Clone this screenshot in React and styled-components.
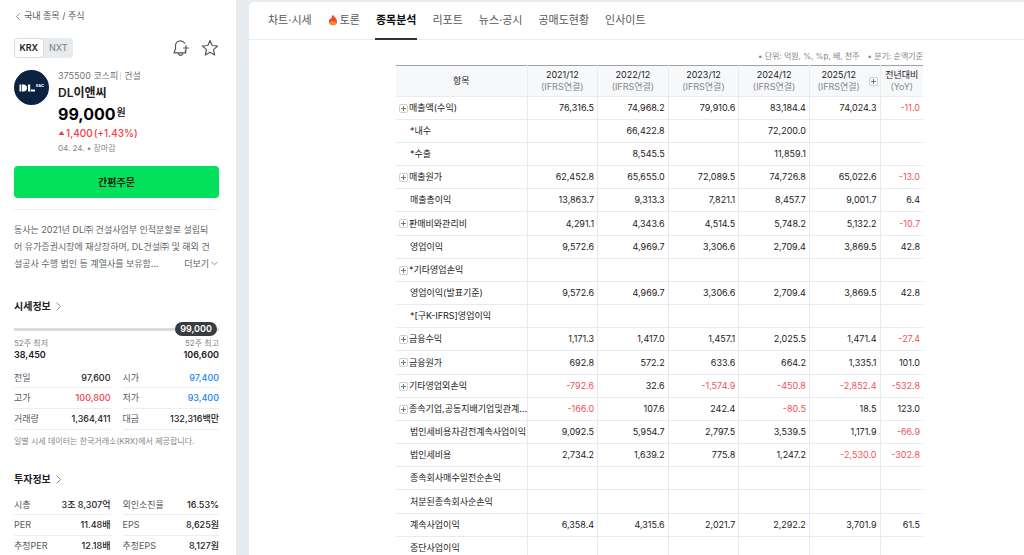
import React from "react";
import styled, { createGlobalStyle } from "styled-components";

const GlobalStyle = createGlobalStyle`
  *, *::before, *::after { box-sizing: border-box; }
  body {
    margin: 0;
    background: #e7ebee;
    color: #1e2022;
    font: 400 9px/12px Inter, "Noto Sans CJK KR", sans-serif;
  }
  button { font: inherit; color: inherit; border: 0; padding: 0; background: none; cursor: pointer; }
  a { color: inherit; text-decoration: none; }
  h1, h2, p, dl, dd, dt { margin: 0; }
  svg { display: block; flex: none; }
`;

const Shell = styled.div`
  display: grid;
  grid-template-columns: 236px minmax(0, 1fr);
  column-gap: 13px;
  height: 100vh;
  overflow: hidden;
`;

const Sidebar = styled.aside`
  padding: 10px 17px 0 14px;
  background: #fff;
  overflow: hidden auto;
  scrollbar-width: none;
`;

const Breadcrumb = styled.nav`
  display: flex;
  align-items: center;
  gap: 4px;
  padding-left: 2px;
  color: #525558;
`;

const Toolbar = styled.div`
  display: flex;
  align-items: center;
  justify-content: space-between;
  margin-top: 16px;
`;

const Market = styled.div`
  display: flex;
  width: 59px;
  height: 20px;
  border-radius: 4px;
  background: #e7ebee;
`;

const MarketButton = styled.button`
  flex: 1;
  border: 1px solid ${(p) => (p.$on ? "#d9dde0" : "transparent")};
  border-radius: 4px;
  background: ${(p) => (p.$on ? "#fff" : "transparent")};
  color: ${(p) => (p.$on ? "#1e2022" : "#858a8f")};
  font-weight: ${(p) => (p.$on ? 600 : 500)};
`;

const Actions = styled.div`
  display: flex;
  gap: 11px;
`;

const IconButton = styled.button`
  width: 18px;
  height: 18px;
`;

const Stock = styled.section`
  display: flex;
  gap: 9px;
  margin-top: 12px;
`;

const Logo = styled.svg`
  width: 35px;
  height: 35px;
`;

const Meta = styled.p`
  display: flex;
  align-items: center;
  color: #6f7478;
`;

const Divider = styled.span`
  width: 1px;
  height: 8px;
  margin: 0 3px 0 2px;
  background: #dfe2e5;
`;

const Name = styled.h1`
  margin-top: 3px;
  font-size: 12px;
  line-height: 16px;
  font-weight: 600;
`;

const Price = styled.p`
  display: flex;
  align-items: flex-start;
  gap: 1px;
  margin-top: 3px;
  color: #000;
  font-size: 16px;
  line-height: 20px;
  font-weight: 700;
  span { font-size: 10px; line-height: 16px; font-weight: 500; }
`;

const Change = styled.p`
  display: flex;
  align-items: center;
  gap: 1px;
  margin-top: 3px;
  color: #f03e46;
  font-size: 10px;
  font-weight: 500;
`;

const State = styled.p`
  margin-top: 3px;
  color: #82878b;
  font-size: 8px;
`;

const Order = styled.button`
  display: block;
  width: 100%;
  height: 32px;
  margin-top: 12px;
  border-radius: 4px;
  background: #03e15c;
  color: #06240f;
  font-size: 10px;
  font-weight: 700;
`;

const About = styled.section`
  display: grid;
  grid-template-columns: 1fr auto;
  margin-top: 11px;
  padding-top: 11px;
  border-top: 1px solid #eceef0;
  color: #606468;
  line-height: 17px;
`;

const AboutText = styled.p`
  grid-column: ${(p) => (p.$wide ? "1 / -1" : "auto")};
  white-space: nowrap;
`;

const More = styled.button`
  display: flex;
  align-items: center;
  gap: 2px;
  padding-right: 1px;
`;

const SectionTitle = styled.h2`
  margin-top: ${(p) => p.$top}px;
  font-size: 10px;
  line-height: 16px;
  font-weight: 700;
  a { display: flex; align-items: center; gap: 5px; }
`;

const Range = styled.div`
  display: flex;
  align-items: center;
  justify-content: flex-end;
  height: 14px;
  margin-top: 8px;
  padding-right: 2px;
  background: linear-gradient(#dadcde, #dadcde) center / 100% 3px no-repeat;
`;

const Pill = styled.span`
  width: 42px;
  border-radius: 7px;
  background: #393c3f;
  color: #fff;
  line-height: 14px;
  font-weight: 600;
  text-align: center;
`;

const RangeEnds = styled.dl`
  display: flex;
  justify-content: space-between;
  margin-top: 1px;
  dt { color: #83888c; font-size: 8px; line-height: 12px; }
  dd { line-height: 11px; font-weight: 600; }
  div:last-child { text-align: right; }
`;

const Facts = styled.dl`
  display: grid;
  grid-template-columns: 1fr 1fr;
  column-gap: 12px;
  margin-top: ${(p) => p.$top}px;
`;

const Fact = styled.div`
  display: flex;
  justify-content: space-between;
  align-items: center;
  height: 20px;
  border-bottom: 1px solid #eceef0;
  white-space: nowrap;
  &:nth-child(n + 3) { height: 21px; }
  dt { color: #55595d; }
  dd { color: ${(p) => p.$color || "#1e2022"}; font-weight: 500; }
`;

const Note = styled.p`
  margin-top: 5px;
  color: #83888c;
  font-size: 8px;
`;

const Main = styled.main`
  margin-top: 2px;
  border-top-left-radius: 5px;
  background: #fff;
  overflow: hidden auto;
  scrollbar-width: none;
`;

const Tabs = styled.nav`
  display: flex;
  gap: 14px;
  height: 38px;
  padding-left: 18px;
  border-bottom: 1px solid #e9ebed;
`;

const Tab = styled.a`
  display: flex;
  align-items: center;
  gap: 2px;
  height: 38px;
  padding: 0 1px;
  border-bottom: 2px solid ${(p) => (p.$on ? "#303336" : "transparent")};
  color: ${(p) => (p.$on ? "#0b0c0d" : "#55595d")};
  font-size: 11px;
  font-weight: ${(p) => (p.$on ? 700 : 400)};
  white-space: nowrap;
`;

const Report = styled.section`
  padding: 9px 101px 0 147px;
`;

const Units = styled.p`
  display: flex;
  justify-content: flex-end;
  gap: 8px;
  height: 16px;
  color: #83888c;
  font-size: 8px;
  line-height: 14px;
`;

const Table = styled.table`
  width: 100%;
  table-layout: fixed;
  border-collapse: collapse;
  border-top: 1px solid #9ba3aa;
  white-space: nowrap;
`;

const Col = styled.col`
  width: ${(p) => p.$w};
`;

const Head = styled.th`
  position: relative;
  height: 31px;
  padding: 0 ${(p) => (p.$more ? 12 : 0)}px 0 0;
  border-bottom: 1px solid #e8eaed;
  border-left: ${(p) => (p.$first ? 0 : 1)}px solid #e8eaed;
  background: #f6f8fa;
  font-weight: 400;
  text-align: center;
  small { display: block; color: #83888c; font-size: 9px; }
`;

const Row = styled.tr`
  height: 23px;
  &:nth-child(6n) { height: 24px; }
`;

const Item = styled.th`
  padding: 0 0 0 3px;
  border-bottom: 1px solid #e8eaed;
  font-weight: 400;
  text-align: left;
`;

const ItemBody = styled.div`
  display: flex;
  align-items: center;
  gap: 1px;
  padding-left: ${(p) => (p.$indent ? 11 : 0)}px;
`;

const Value = styled.td`
  padding: 0 3px 0 0;
  border-bottom: 1px solid #e8eaed;
  border-left: 1px solid #e8eaed;
  color: ${(p) => (p.$negative ? "#f0535a" : "#1e2022")};
  text-align: right;
`;

const Plus = styled.button`
  display: grid;
  place-items: center;
  flex: none;
  width: 9px;
  height: 9px;
  border: 1px solid #cdd1d4;
  border-radius: 2px;
  background: #fff;
`;

const HeadPlus = styled(Plus)`
  position: absolute;
  top: 11px;
  right: 2px;
`;

const Cross = () => (
  <svg width="7" height="7" viewBox="0 0 7 7" stroke="#74787c"><path d="M1 3.5h5M3.5 1v5" /></svg>
);

const Chevron = ({ d, w, h }) => (
  <svg width={w} height={h} viewBox={`0 0 ${w} ${h}`} fill="none" stroke="#898e92"><path d={d} /></svg>
);

const prices = [
  ["전일", "97,600"], ["시가", "97,400", "#1c84f5"],
  ["고가", "100,800", "#f03e46"], ["저가", "93,400", "#1c84f5"],
  ["거래량", "1,364,411"], ["대금", "132,316백만"],
];
const invest = [
  ["시총", "3조 8,307억"], ["외인소진율", "16.53%"],
  ["PER", "11.48배"], ["EPS", "8,625원"],
  ["추정PER", "12.18배"], ["추정EPS", "8,127원"],
];
const years = ["2021/12", "2022/12", "2023/12", "2024/12", "2025/12"];
const rows = [
  ["매출액(수익)", 1, "76,316.5", "74,968.2", "79,910.6", "83,184.4", "74,024.3", "-11.0"],
  ["*내수", 0, "", "66,422.8", "", "72,200.0", "", ""],
  ["*수출", 0, "", "8,545.5", "", "11,859.1", "", ""],
  ["매출원가", 1, "62,452.8", "65,655.0", "72,089.5", "74,726.8", "65,022.6", "-13.0"],
  ["매출총이익", 0, "13,863.7", "9,313.3", "7,821.1", "8,457.7", "9,001.7", "6.4"],
  ["판매비와관리비", 1, "4,291.1", "4,343.6", "4,514.5", "5,748.2", "5,132.2", "-10.7"],
  ["영업이익", 0, "9,572.6", "4,969.7", "3,306.6", "2,709.4", "3,869.5", "42.8"],
  ["*기타영업손익", 1, "", "", "", "", "", ""],
  ["영업이익(발표기준)", 0, "9,572.6", "4,969.7", "3,306.6", "2,709.4", "3,869.5", "42.8"],
  ["*[구K-IFRS]영업이익", 0, "", "", "", "", "", ""],
  ["금융수익", 1, "1,171.3", "1,417.0", "1,457.1", "2,025.5", "1,471.4", "-27.4"],
  ["금융원가", 1, "692.8", "572.2", "633.6", "664.2", "1,335.1", "101.0"],
  ["기타영업외손익", 1, "-792.6", "32.6", "-1,574.9", "-450.8", "-2,852.4", "-532.8"],
  ["종속기업,공동지배기업및관계...", 1, "-166.0", "107.6", "242.4", "-80.5", "18.5", "123.0"],
  ["법인세비용차감전계속사업이익", 0, "9,092.5", "5,954.7", "2,797.5", "3,539.5", "1,171.9", "-66.9"],
  ["법인세비용", 0, "2,734.2", "1,639.2", "775.8", "1,247.2", "-2,530.0", "-302.8"],
  ["종속회사매수일전순손익", 0, "", "", "", "", "", ""],
  ["처분된종속회사순손익", 0, "", "", "", "", "", ""],
  ["계속사업이익", 0, "6,358.4", "4,315.6", "2,021.7", "2,292.2", "3,701.9", "61.5"],
  ["중단사업이익", 0, "", "", "", "", "", ""],
];
const tabs = ["차트·시세", "토론", "종목분석", "리포트", "뉴스·공시", "공매도현황", "인사이트"];

const Flame = () => (
  <svg width="10" height="12" viewBox="0 0 11 13">
    <path d="M5.8.8C6.2 3 9.9 4.6 9.9 8.2c0 2.4-1.8 4.1-4.3 4.1S1 10.600 1 8.200c0-1.700.9-2.900 1.700-3.700.2.8.5 1.100.9 1.300C3.600 3.600 4.500 1.900 5.800.8Z" fill="#f2452f" />
    <path d="M1.300 9.300c.6-1 1.500-1.300 2.300-.8.700-1.200 2.500-1.400 3.300 0 .9-.5 2.100-.2 2.700.8-.5 1.900-2.100 3-4 3s-3.800-1.100-4.300-3Z" fill="#ff8a1f" />
  </svg>
);

const FactList = ({ items, top }) => (
  <Facts $top={top}>
    {items.map(([label, value, color]) => (
      <Fact key={label} $color={color}><dt>{label}</dt><dd>{value}</dd></Fact>
    ))}
  </Facts>
);

export default function App() {
  return (
    <Shell>
      <GlobalStyle />
      <Sidebar>
        <Breadcrumb>
          <Chevron w={4} h={7} d="M3.500.5l-3 3 3 3" />
          <a href="#domestic">국내 종목 / 주식</a>
        </Breadcrumb>
        <Toolbar>
          <Market>
            <MarketButton $on>KRX</MarketButton>
            <MarketButton>NXT</MarketButton>
          </Market>
          <Actions>
            <IconButton aria-label="알림 추가">
              <svg width="18" height="18" viewBox="0 0 18 18" fill="none" stroke="#55595d" strokeWidth="1.200" strokeLinecap="round" strokeLinejoin="round">
                <path d="M12.700 4.200C11.800 2.700 10.300 1.900 8.500 1.900c-2.900 0-5 2.100-5 4.900v3.300L2 13.800h12l-.9-2M6.200 14c.2 1.500 1 2.300 2.300 2.300s2.100-.8 2.300-2.300M11.500 9h5M14 6.500v5" />
              </svg>
            </IconButton>
            <IconButton aria-label="관심 종목">
              <svg width="18" height="18" viewBox="0 0 18 18" fill="none" stroke="#55595d" strokeWidth="1.200" strokeLinejoin="round">
                <path d="M9 1.500l2.200 5 5.400.5-4.100 3.600 1.200 5.400L9 13.200 4.300 16l1.200-5.400L1.400 7l5.400-.5z" />
              </svg>
            </IconButton>
          </Actions>
        </Toolbar>
        <Stock>
          <Logo viewBox="0 0 35 35" role="img" aria-label="DL E&amp;C">
            <circle cx="17.500" cy="17.500" r="17.500" fill="#0b2240" />
            <path fill="#fff" d="M5.500 14.500h1.800v7H5.500zM8 14.500h1.500c2.300 0 3.500 1.400 3.500 3.500s-1.200 3.500-3.500 3.500H8zM14 14.500h2.200v7H14zM16.800 19.500h4.200v2h-4.200z" />
            <text x="22" y="17" fill="#fff" fontSize="4" fontWeight="700">E&amp;C</text>
          </Logo>
          <div>
            <Meta>375500 코스피<Divider />건설</Meta>
            <Name>DL이앤씨</Name>
            <Price>99,000<span>원</span></Price>
            <Change>
              <svg width="7" height="6" viewBox="0 0 7 6"><path d="M3.500 1L6.500 5h-6z" fill="#f03e46" /></svg>
              <span>1,400</span><span>(+1.43%)</span>
            </Change>
            <State>04. 24. • 장마감</State>
          </div>
        </Stock>
        <Order>간편주문</Order>
        <About>
          <AboutText $wide>동사는 2021년 DL㈜ 건설사업부 인적분할로 설립되<br />어 유가증권시장에 재상장하며, DL건설㈜ 및 해외 건</AboutText>
          <AboutText>설공사 수행 법인 등 계열사를 보유함...</AboutText>
          <More>더보기<Chevron w={7} h={5} d="M.5.8l3 3 3-3" /></More>
        </About>
        <SectionTitle $top={26}><a href="#price">시세정보<Chevron w={5} h={9} d="M.5.5l4 4-4 4" /></a></SectionTitle>
        <Range><Pill>99,000</Pill></Range>
        <RangeEnds>
          <div><dt>52주 최저</dt><dd>38,450</dd></div>
          <div><dt>52주 최고</dt><dd>106,600</dd></div>
        </RangeEnds>
        <FactList items={prices} top={8} />
        <Note>일별 시세 데이터는 한국거래소(KRX)에서 제공합니다.</Note>
        <SectionTitle $top={24}><a href="#invest">투자정보<Chevron w={5} h={9} d="M.5.5l4 4-4 4" /></a></SectionTitle>
        <FactList items={invest} top={8} />
      </Sidebar>
      <Main>
        <Tabs>
          {tabs.map((t, i) => (
            <Tab key={t} href={`#tab${i}`} $on={i === 2}>{i === 1 && <Flame />}{t}</Tab>
          ))}
        </Tabs>
        <Report>
          <Units><span>▪ 단위: 억원, %, %p, 배, 천주</span><span>▪ 분기: 순액기준</span></Units>
          <Table>
            <colgroup>
              <Col $w="131px" />
              {years.map((y) => <Col key={y} $w="auto" />)}
              <Col $w="43px" />
            </colgroup>
            <thead>
              <tr>
                <Head $first scope="col">항목</Head>
                {years.map((y, i) => (
                  <Head key={y} $more={i === 4} scope="col">
                    {y}<small>(IFRS연결)</small>
                    {i === 4 && <HeadPlus aria-label="분기 펼치기"><Cross /></HeadPlus>}
                  </Head>
                ))}
                <Head scope="col">전년대비<small>(YoY)</small></Head>
              </tr>
            </thead>
            <tbody>
              {rows.map(([name, open, ...values]) => (
                <Row key={name}>
                  <Item scope="row">
                    <ItemBody $indent={!open}>
                      {open ? <Plus aria-label={`${name} 펼치기`}><Cross /></Plus> : null}
                      {name}
                    </ItemBody>
                  </Item>
                  {values.map((v, i) => <Value key={i} $negative={v.startsWith("-")}>{v}</Value>)}
                </Row>
              ))}
            </tbody>
          </Table>
        </Report>
      </Main>
    </Shell>
  );
}
